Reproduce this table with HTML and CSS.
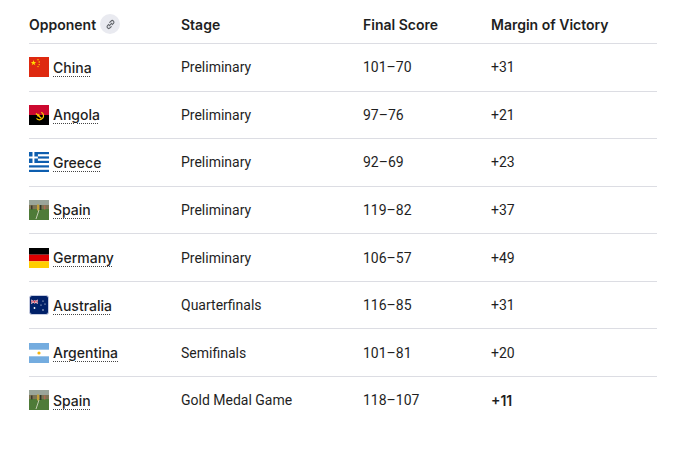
FILE: index.html
```html
<!DOCTYPE html>
<html lang="en">
<head>
<meta charset="utf-8">
<title>Results</title>
<link rel="stylesheet" href="styles.css">
</head>
<body>
<div class="table">
  <div class="row head">
    <div class="cell">Opponent <span class="link-btn"><svg viewBox="0 0 12 12" width="11" height="11"><g fill="none" stroke="#5f6368" stroke-width="1.2" stroke-linecap="round"><path d="M5.2 3.6 L6.6 2.2 a1.8 1.8 0 0 1 2.6 2.6 L7.8 6.2"/><path d="M6.8 8.4 L5.4 9.8 a1.8 1.8 0 0 1 -2.6 -2.6 L4.2 5.8"/><path d="M4.6 7.4 L7.4 4.6"/></g></svg></span></div>
    <div class="cell">Stage</div>
    <div class="cell">Final Score</div>
    <div class="cell">Margin of Victory</div>
  </div>

  <div class="row">
    <div class="cell team"><svg class="flag" viewBox="0 0 20 20"><rect width="20" height="20" fill="#de2910"/><polygon points="4.5,3 5.2,5 7.3,5 5.6,6.2 6.3,8.2 4.5,7 2.7,8.2 3.4,6.2 1.7,5 3.8,5" fill="#ffde00"/><circle cx="9" cy="2.8" r="0.7" fill="#ffde00"/><circle cx="10.2" cy="5" r="0.7" fill="#ffde00"/><circle cx="10.2" cy="7.6" r="0.7" fill="#ffde00"/><circle cx="9" cy="9.6" r="0.7" fill="#ffde00"/></svg><span class="name">China</span></div>
    <div class="cell">Preliminary</div>
    <div class="cell">101–70</div>
    <div class="cell">+31</div>
  </div>

  <div class="row">
    <div class="cell team"><svg class="flag" viewBox="0 0 20 20"><rect width="20" height="10" fill="#cc092f"/><rect y="10" width="20" height="10" fill="#000"/><path d="M12.3 7.2 a4 4 0 1 1 -4.8 6.2" fill="none" stroke="#ffcb00" stroke-width="1.2"/><path d="M7 8.5 L12.5 13.5" stroke="#ffcb00" stroke-width="1.3"/><polygon points="9.5,8.5 10,9.8 11.3,9.8 10.3,10.6 10.7,11.9 9.5,11.1 8.3,11.9 8.7,10.6 7.7,9.8 9,9.8" fill="#ffcb00"/></svg><span class="name">Angola</span></div>
    <div class="cell">Preliminary</div>
    <div class="cell">97–76</div>
    <div class="cell">+21</div>
  </div>

  <div class="row">
    <div class="cell team"><svg class="flag" viewBox="0 0 20 20"><rect width="20" height="20" fill="#fff"/><g fill="#0d5eaf"><rect y="0" width="20" height="2.2"/><rect y="4.4" width="20" height="2.2"/><rect y="8.8" width="20" height="2.2"/><rect y="13.3" width="20" height="2.2"/><rect y="17.8" width="20" height="2.2"/><rect width="8.9" height="11"/></g><rect x="3.5" width="1.9" height="11" fill="#fff"/><rect y="4.5" width="8.9" height="2" fill="#fff"/></svg><span class="name">Greece</span></div>
    <div class="cell">Preliminary</div>
    <div class="cell">92–69</div>
    <div class="cell">+23</div>
  </div>

  <div class="row">
    <div class="cell team"><svg class="flag" viewBox="0 0 20 20"><rect width="20" height="20" fill="#4f7a3a"/><rect width="20" height="6" fill="#9aa59a"/><rect y="5" width="20" height="4" fill="#7c7454"/><rect y="9" width="20" height="11" fill="#4e7b38"/><rect x="2" y="5.5" width="1.5" height="4" fill="#3a3a2e"/><rect x="8" y="4.5" width="2" height="6" fill="#c2a03a"/><rect x="11" y="5" width="1.4" height="5" fill="#2f3a2c"/><rect x="15" y="5.5" width="1.4" height="4" fill="#b06a50"/><path d="M10 10 L7 19" stroke="#e0e0d0" stroke-width="0.8"/></svg><span class="name">Spain</span></div>
    <div class="cell">Preliminary</div>
    <div class="cell">119–82</div>
    <div class="cell">+37</div>
  </div>

  <div class="row">
    <div class="cell team"><svg class="flag" viewBox="0 0 20 20"><rect width="20" height="6.7" fill="#000"/><rect y="6.7" width="20" height="6.6" fill="#dd0000"/><rect y="13.3" width="20" height="6.7" fill="#ffce00"/></svg><span class="name">Germany</span></div>
    <div class="cell">Preliminary</div>
    <div class="cell">106–57</div>
    <div class="cell">+49</div>
  </div>

  <div class="row">
    <div class="cell team"><svg class="flag" viewBox="0 0 20 20"><rect x="0.5" y="0.5" width="19" height="19" rx="2.5" fill="#012169" stroke="#c5cbe0" stroke-width="1"/><rect x="2" y="5" width="7" height="3.5" fill="#012169"/><path d="M2 5 L9 8.5 M9 5 L2 8.5" stroke="#fff" stroke-width="1"/><path d="M2 5 L9 8.5 M9 5 L2 8.5" stroke="#c8102e" stroke-width="0.4"/><rect x="5" y="5" width="1.2" height="3.5" fill="#fff"/><rect x="2" y="6.2" width="7" height="1.2" fill="#fff"/><rect x="5.3" y="5" width="0.6" height="3.5" fill="#c8102e"/><rect x="2" y="6.5" width="7" height="0.6" fill="#c8102e"/><circle cx="5.5" cy="13" r="0.9" fill="#fff"/><circle cx="14" cy="6" r="0.6" fill="#fff"/><circle cx="16" cy="9" r="0.6" fill="#fff"/><circle cx="12" cy="10" r="0.6" fill="#fff"/><circle cx="14" cy="15" r="0.7" fill="#fff"/></svg><span class="name">Australia</span></div>
    <div class="cell">Quarterfinals</div>
    <div class="cell">116–85</div>
    <div class="cell">+31</div>
  </div>

  <div class="row">
    <div class="cell team"><svg class="flag" viewBox="0 0 20 20"><rect width="20" height="20" fill="#74acdf"/><rect y="6.7" width="20" height="6.6" fill="#fff"/><circle cx="10" cy="10" r="1.6" fill="#f6b40e"/></svg><span class="name">Argentina</span></div>
    <div class="cell">Semifinals</div>
    <div class="cell">101–81</div>
    <div class="cell">+20</div>
  </div>

  <div class="row last">
    <div class="cell team"><svg class="flag" viewBox="0 0 20 20"><rect width="20" height="20" fill="#4f7a3a"/><rect width="20" height="6" fill="#9aa59a"/><rect y="5" width="20" height="4" fill="#7c7454"/><rect y="9" width="20" height="11" fill="#4e7b38"/><rect x="2" y="5.5" width="1.5" height="4" fill="#3a3a2e"/><rect x="8" y="4.5" width="2" height="6" fill="#c2a03a"/><rect x="11" y="5" width="1.4" height="5" fill="#2f3a2c"/><rect x="15" y="5.5" width="1.4" height="4" fill="#b06a50"/><path d="M10 10 L7 19" stroke="#e0e0d0" stroke-width="0.8"/></svg><span class="name">Spain</span></div>
    <div class="cell">Gold Medal Game</div>
    <div class="cell">118–107</div>
    <div class="cell strong">+11</div>
  </div>
</div>
</body>
</html>
```

FILE: styles.css
```css
html, body {
  margin: 0;
  padding: 0;
  background: #fff;
}
body {
  font-family: Roboto, "Noto Sans", sans-serif;
  font-size: 14px;
  color: #1f1f1f;
}
.table {
  margin-left: 29px;
  width: 628px;
}
.row {
  display: grid;
  grid-template-columns: 152px 182px 128px 166px;
  align-items: center;
  height: 46.57px;
  border-bottom: 1px solid #dcdde3;
}
.row.head {
  height: 38px;
  padding-top: 5px;
  font-family: Inter, Roboto, sans-serif;
  font-weight: 600;
}
.row.last {
  border-bottom: none;
}
.cell {
  display: flex;
  align-items: center;
  white-space: nowrap;
}
.link-btn {
  display: inline-flex;
  align-items: center;
  justify-content: center;
  width: 20px;
  height: 20px;
  border-radius: 50%;
  background: #e9eaf0;
  margin-left: 4px;
}
.flag {
  width: 20px;
  height: 20px;
  margin-right: 4px;
  flex: none;
}
.name {
  font-family: Inter, Roboto, sans-serif;
  font-weight: 500;
  text-decoration: underline dotted #444;
  text-underline-offset: 3px;
  text-decoration-thickness: 1px;
}
.strong {
  font-family: Inter, Roboto, sans-serif;
  font-weight: 600;
}
```
